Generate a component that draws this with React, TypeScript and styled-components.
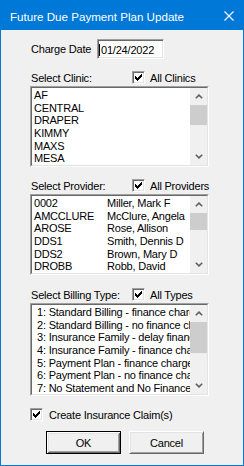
import React from 'react';
import styled, { createGlobalStyle } from 'styled-components';

const Global = createGlobalStyle`
  html, body { margin: 0; padding: 0; background: #f0f0f0; }
  body { font-family: "Liberation Sans", Arial, sans-serif; }
  * { box-sizing: border-box; }
`;

const Window = styled.div`
  width: 244px;
  height: 466px;
  border: 1px solid #0078d7;
  background: #f0f0f0;
  display: flex;
  flex-direction: column;
  color: #000;
  font-size: 11px;
  letter-spacing: -0.2px;
  white-space: nowrap;
`;

const TitleBar = styled.div`
  height: 29px;
  flex: none;
  background: #0078d7;
  color: #fff;
  display: flex;
  align-items: center;
  justify-content: space-between;
  padding: 0 9px;
  font-size: 11.6px;
  letter-spacing: 0;
`;

const TitleText = styled.span`
  padding-top: 1px;
`;

const Content = styled.div`
  display: flex;
  flex-direction: column;
  align-items: flex-start;
  padding: 9px 0 0 29px;
`;

const ChargeRow = styled.div`
  display: flex;
  align-items: center;
  height: 20px;
`;

const ChargeLabel = styled.span`
  width: 67px;
  padding-left: 1px;
`;

const Sunken = styled.div`
  border: 1px solid;
  border-color: #a0a0a0 #ffffff #ffffff #a0a0a0;
  background: #fff;
`;

const InputBox = styled(Sunken)`
  width: 67px;
  height: 20px;
  box-shadow: inset 1px 1px 0 #696969, inset -1px -1px 0 #e3e3e3;
  display: flex;
  align-items: center;
  padding-left: 1px;
  padding-top: 1px;
`;

const Caret = styled.span`
  width: 1px;
  height: 12px;
  background: #000;
  margin-right: 1px;
`;

const LabelRow = styled.div<{ $mt: number }>`
  display: flex;
  align-items: center;
  height: 13px;
  margin-top: ${p => p.$mt}px;
`;

const RowLabel = styled.span`
  width: 102px;
  padding-left: 1px;
`;

const CheckBox = styled.span`
  width: 13px;
  height: 13px;
  flex: none;
  border: 1px solid;
  border-color: #a0a0a0 #ffffff #ffffff #a0a0a0;
  box-shadow: inset 1px 1px 0 #696969, inset -1px -1px 0 #e3e3e3;
  background: #fff;
  display: flex;
  align-items: center;
  justify-content: center;
`;

const CheckText = styled.span<{ $gap: number }>`
  margin-left: ${p => p.$gap}px;
`;

const ListOuter = styled(Sunken)<{ $h: number }>`
  margin-top: 2px;
  width: 179px;
  height: ${p => p.$h}px;
`;

const ListInner = styled.div`
  height: 100%;
  border: 1px solid;
  border-color: #696969 #e3e3e3 #e3e3e3 #696969;
  display: flex;
  background: #fff;
`;

const Items = styled.div`
  flex: 1;
  min-width: 0;
  overflow: hidden;
  padding-top: 1px;
`;

const Item = styled.div<{ $indent: number }>`
  height: 12.7px;
  line-height: 12.7px;
  white-space: nowrap;
  padding-left: ${p => p.$indent}px;
`;

const ProvItem = styled(Item)`
  display: grid;
  grid-template-columns: 73px auto;
`;

const ScrollBar = styled.div`
  width: 17px;
  flex: none;
  background: #f0f0f0;
  display: flex;
  flex-direction: column;
`;

const ScrollArrow = styled.div`
  height: 17px;
  flex: none;
  display: flex;
  align-items: center;
  justify-content: center;
`;

const Track = styled.div`
  flex: 1;
`;

const Thumb = styled.div<{ $h: number }>`
  height: ${p => p.$h}px;
  background: #cdcdcd;
`;

const CreateRow = styled.div`
  display: flex;
  align-items: center;
  height: 13px;
  margin-top: 12px;
`;

const ButtonRow = styled.div`
  display: flex;
  gap: 8px;
  margin-top: 10px;
  margin-left: 16px;
`;

const Button = styled.div<{ $default?: boolean }>`
  width: 75px;
  height: 23px;
  display: flex;
  align-items: center;
  justify-content: center;
  background: #f0f0f0;
  border: 1px solid;
  border-color: ${p => (p.$default ? '#000' : '#fff #696969 #696969 #fff')};
  box-shadow: ${p =>
    p.$default
      ? 'inset 1px 1px 0 #fff, inset -1px -1px 0 #696969, inset 2px 2px 0 #e3e3e3, inset -2px -2px 0 #a0a0a0'
      : 'inset 1px 1px 0 #e3e3e3, inset -1px -1px 0 #a0a0a0'};
  padding-top: 1px;
`;

const Check = () => (
  <svg width="7" height="7" viewBox="0 0 7 7" shapeRendering="crispEdges">
    <path
      d="M6 0h1v1H6zM5 1h2v1H5zM0 2h1v1H0zM4 2h3v1H4zM0 3h2v1H0zM3 3h3v1H3zM0 4h5v1H0zM1 5h3v1H1zM2 6h1v1H2z"
      fill="#000"
    />
  </svg>
);

const Chevron = ({ up }: { up?: boolean }) => (
  <svg width="8" height="5" viewBox="0 0 8 5">
    <path
      d={up ? 'M0.8 4.3 L4 1.1 L7.2 4.3' : 'M0.8 0.7 L4 3.9 L7.2 0.7'}
      fill="none"
      stroke="#606060"
      strokeWidth="1.6"
    />
  </svg>
);

const Scroll = ({ thumb }: { thumb: number }) => (
  <ScrollBar>
    <ScrollArrow>
      <Chevron up />
    </ScrollArrow>
    <Track>
      <Thumb $h={thumb} />
    </Track>
    <ScrollArrow>
      <Chevron />
    </ScrollArrow>
  </ScrollBar>
);

const clinics = ['AF', 'CENTRAL', 'DRAPER', 'KIMMY', 'MAXS', 'MESA'];
const providers: [string, string][] = [
  ['0002', 'Miller, Mark F'],
  ['AMCCLURE', 'McClure, Angela'],
  ['AROSE', 'Rose, Allison'],
  ['DDS1', 'Smith, Dennis D'],
  ['DDS2', 'Brown, Mary D'],
  ['DROBB', 'Robb, David'],
];
const billing = [
  '1: Standard Billing - finance charge',
  '2: Standard Billing - no finance charge',
  '3: Insurance Family - delay finance charge',
  '4: Insurance Family - finance charge',
  '5: Payment Plan - finance charge',
  '6: Payment Plan - no finance charge',
  '7: No Statement and No Finance Charge',
];

const CloseIcon = () => (
  <svg width="10" height="10" viewBox="0 0 10 10">
    <path d="M0.5 0.5 L9.5 9.5 M9.5 0.5 L0.5 9.5" stroke="#fff" strokeWidth="1.1" />
  </svg>
);

export default function App() {
  return (
    <>
      <Global />
      <Window>
        <TitleBar>
          <TitleText>Future Due Payment Plan Update</TitleText>
          <CloseIcon />
        </TitleBar>
        <Content>
          <ChargeRow>
            <ChargeLabel>Charge Date</ChargeLabel>
            <InputBox>
              <Caret />
              <span>01/24/2022</span>
            </InputBox>
          </ChargeRow>

          <LabelRow $mt={12}>
            <RowLabel>Select Clinic:</RowLabel>
            <CheckBox>
              <Check />
            </CheckBox>
            <CheckText $gap={5}>All Clinics</CheckText>
          </LabelRow>
          <ListOuter $h={81}>
            <ListInner>
              <Items>
                {clinics.map(c => (
                  <Item key={c} $indent={2}>
                    {c}
                  </Item>
                ))}
              </Items>
              <Scroll thumb={20} />
            </ListInner>
          </ListOuter>

          <LabelRow $mt={12}>
            <RowLabel>Select Provider:</RowLabel>
            <CheckBox>
              <Check />
            </CheckBox>
            <CheckText $gap={5}>All Providers</CheckText>
          </LabelRow>
          <ListOuter $h={81}>
            <ListInner>
              <Items>
                {providers.map(([code, name]) => (
                  <ProvItem key={code} $indent={2}>
                    <span>{code}</span>
                    <span>{name}</span>
                  </ProvItem>
                ))}
              </Items>
              <Scroll thumb={17} />
            </ListInner>
          </ListOuter>

          <LabelRow $mt={13}>
            <RowLabel>Select Billing Type:</RowLabel>
            <CheckBox>
              <Check />
            </CheckBox>
            <CheckText $gap={5}>All Types</CheckText>
          </LabelRow>
          <ListOuter $h={93}>
            <ListInner>
              <Items>
                {billing.map(b => (
                  <Item key={b} $indent={5}>
                    {b}
                  </Item>
                ))}
              </Items>
              <Scroll thumb={31} />
            </ListInner>
          </ListOuter>

          <CreateRow>
            <CheckBox>
              <Check />
            </CheckBox>
            <CheckText $gap={6}>Create Insurance Claim(s)</CheckText>
          </CreateRow>

          <ButtonRow>
            <Button $default>OK</Button>
            <Button>Cancel</Button>
          </ButtonRow>
        </Content>
      </Window>
    </>
  );
}
